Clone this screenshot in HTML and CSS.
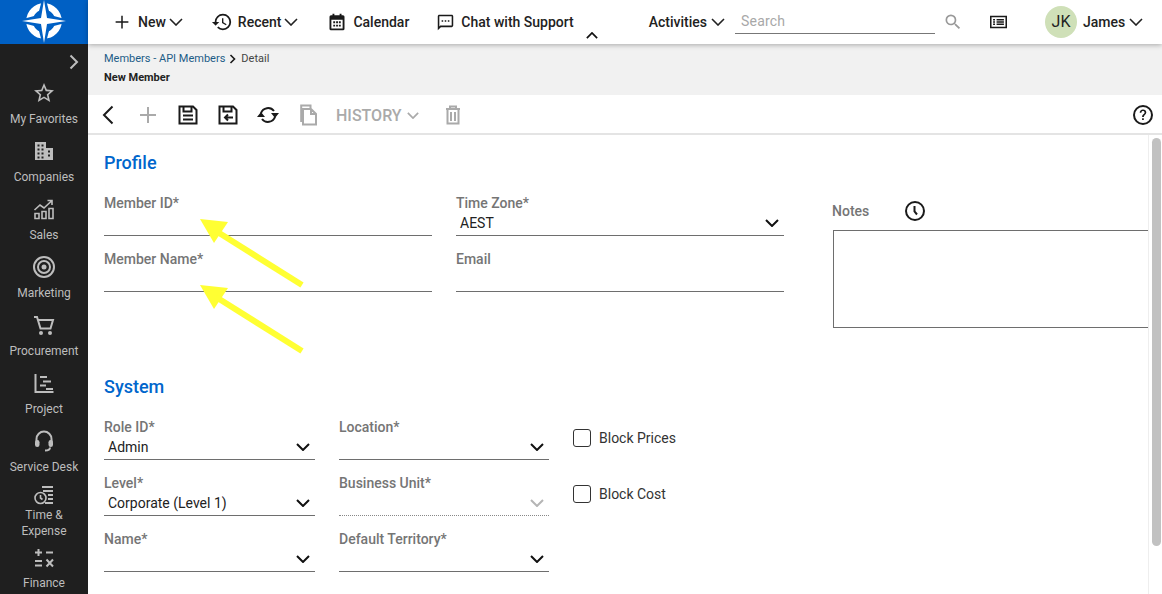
FILE: index.html
```html
<!DOCTYPE html>
<html lang="en">
<head>
    <meta charset="UTF-8">
    <meta name="viewport" content="width=device-width, initial-scale=1.0">
    <title>New Member</title>
    <link rel="stylesheet" href="styles.css">
</head>
<body>
    <!-- Sidebar -->
    <aside class="sidebar">
        <div class="logo">
            <svg width="50" height="44" viewBox="0 0 50 44">
                <circle cx="25" cy="21" r="14.500" fill="none" stroke="#fff" stroke-width="6.500"/>
                <path d="M25 -8L31 15L54 21L31 27L25 50L19 27L-4 21L19 15Z" fill="#0060c4"/>
                <path d="M25 0L28 18L47 21L28 24L25 43L22 24L3 21L22 18Z" fill="#fff"/>
            </svg>
        </div>
        <div class="expand">
            <svg width="12" height="16" viewBox="0 0 12 16"><path d="M2.500 1.500L9 8L2.500 14.500" class="line"/></svg>
        </div>
        <nav class="side-nav">
            <a class="side-item">
                <svg class="side-icon" viewBox="0 0 24 24"><path d="M22 9.240l-7.190-.62L12 2 9.190 8.630 2 9.240l5.460 4.730L5.820 21 12 17.270 18.180 21l-1.630-7.030L22 9.240zM12 15.400l-3.760 2.270 1-4.280-3.320-2.880 4.380-.38L12 6.100l1.710 4.040 4.380.38-3.320 2.880 1 4.280L12 15.400z"/></svg>
                <span>My Favorites</span>
            </a>
            <a class="side-item">
                <svg class="side-icon" viewBox="0 0 24 24"><path fill-rule="evenodd" d="M3 3h11v6h7v12H3zM5.500 5.500v2h2v-2zm4 0v2h2v-2zm-4 4v2h2v-2zm4 0v2h2v-2zm-4 4v2h2v-2zm4 0v2h2v-2zm-4 4v2h2v-2zm4 0v2h2v-2zm6.500-6v2h2v-2zm0 4v2h2v-2z"/></svg>
                <span>Companies</span>
            </a>
            <a class="side-item">
                <svg class="side-icon" viewBox="0 0 24 24"><path d="M2.500 13L8 8l4 3 7.500-7M15.500 3.500h4.500V8" class="line thin"/><path d="M3 16.500h4v5H3zM10 14.500h4v7h-4zM17 11.500h4v10h-4z" class="line thin"/></svg>
                <span>Sales</span>
            </a>
            <a class="side-item">
                <svg class="side-icon" viewBox="0 0 24 24"><circle cx="12" cy="12" r="10" class="line"/><circle cx="12" cy="12" r="6" class="line"/><circle cx="12" cy="12" r="2.500"/></svg>
                <span>Marketing</span>
            </a>
            <a class="side-item">
                <svg class="side-icon" viewBox="0 0 24 24"><path d="M2 4h3l3.500 11.500h10L21 7H6" class="line"/><circle cx="9" cy="20" r="2"/><circle cx="18" cy="20" r="2"/></svg>
                <span>Procurement</span>
            </a>
            <a class="side-item">
                <svg class="side-icon" viewBox="0 0 24 24"><path d="M3.500 3v18h18M8 6h7M11 10.500h8M8 14.500h6M14 18h7" class="line"/></svg>
                <span>Project</span>
            </a>
            <a class="side-item">
                <svg class="side-icon" viewBox="0 0 24 24"><path d="M4.500 13v-3a7.500 7.500 0 0 1 15 0v3M18 18.500c0 2-2 3-5 3" class="line"/><rect x="3" y="11" width="4.500" height="7" rx="2.200"/><rect x="16.500" y="11" width="4.500" height="7" rx="2.200"/></svg>
                <span>Service Desk</span>
            </a>
            <a class="side-item side-item-time">
                <svg class="side-icon" viewBox="0 0 24 24"><circle cx="8.500" cy="15" r="5.500" class="line thin"/><path d="M8.500 12v3l2 1.500" class="line thin"/><path d="M10 3h11v2H10zM11 7h10v2H11zM16 11h5v2h-5zM16 15h5v2h-5zM13 19h8v2h-8z"/></svg>
                <span>Time &amp; Expense</span>
            </a>
            <a class="side-item side-item-finance">
                <svg class="side-icon" viewBox="0 0 24 24"><path d="M3 6.500h7M6.500 3v7M14 6.500h7M3 15h7M3 19.500h7M14.500 13.500l6.500 7M21 13.500l-6.500 7" class="line"/></svg>
                <span>Finance</span>
            </a>
        </nav>
    </aside>

    <div class="page">
        <!-- Top bar -->
        <header class="topbar">
            <a class="top-link top-new">
                <svg class="top-icon" viewBox="0 0 24 24"><path d="M12 3.500v17M3.500 12h17" class="line"/></svg>
                <span>New</span>
                <svg class="chev" viewBox="0 0 14 8"><path d="M1 1l6 6 6-6"/></svg>
            </a>
            <a class="top-link top-recent">
                <svg class="top-icon wide" viewBox="0 0 24 24"><path d="M13 3a9 9 0 0 0-9 9H1l3.890 3.890.07.14L9 12H6c0-3.870 3.130-7 7-7s7 3.130 7 7-3.130 7-7 7c-1.930 0-3.680-.79-4.940-2.060l-1.420 1.420A8.954 8.954 0 0 0 13 21a9 9 0 0 0 0-18zm-1 5v5l4.280 2.540.72-1.210-3.500-2.080V8H12z"/></svg>
                <span>Recent</span>
                <svg class="chev" viewBox="0 0 14 8"><path d="M1 1l6 6 6-6"/></svg>
            </a>
            <a class="top-link top-calendar">
                <svg class="top-icon" viewBox="0 0 24 24"><path fill-rule="evenodd" d="M6 1h2.500v2h7V1H18v2h2a2 2 0 0 1 2 2v16a2 2 0 0 1-2 2H4a2 2 0 0 1-2-2V5a2 2 0 0 1 2-2h2zM4.500 9v11.500h15V9zM7 11h2.500v2.500H7zm3.800 0h2.500v2.500h-2.500zm3.700 0H17v2.500h-2.500zM7 15.500h2.500V18H7zm3.800 0h2.500V18h-2.500zm3.700 0H17V18h-2.500z"/></svg>
                <span>Calendar</span>
            </a>
            <a class="top-link top-chat">
                <svg class="top-icon" viewBox="1 1 22 22"><path d="M20 2H4c-1.100 0-2 .9-2 2v18l4-4h14c1.100 0 2-.9 2-2V4c0-1.100-.9-2-2-2zm0 14H5.170L4 17.170V4h16v12zM7 9h2v2H7zm4 0h2v2h-2zm4 0h2v2h-2z"/></svg>
                <span>Chat with Support</span>
            </a>
            <svg class="caret" viewBox="0 0 14 8"><path d="M1 7l6-6 6 6"/></svg>
            <a class="top-link top-activities">
                <span>Activities</span>
                <svg class="chev" viewBox="0 0 14 8"><path d="M1 1l6 6 6-6"/></svg>
            </a>
            <div class="search-box">Search</div>
            <svg class="search-icon" viewBox="0 0 24 24"><path d="M15.500 14h-.79l-.28-.27A6.471 6.471 0 0 0 16 9.500 6.500 6.500 0 1 0 9.500 16c1.610 0 3.090-.59 4.230-1.570l.27.28v.79l5 4.990L20.490 19l-4.990-5zm-6 0C7.010 14 5 11.990 5 9.500S7.010 5 9.500 5 14 7.010 14 9.500 11.990 14 9.500 14z"/></svg>
            <svg class="top-icon top-list" viewBox="1 3 22 18"><path fill-rule="evenodd" d="M1 4h22v16H1zM3 6v12h18V6zM5 8h2.500v2H5zm4.500 0H19v2H9.500zM5 11h2.500v2H5zm4.500 0H19v2H9.500zM5 14h2.500v2H5zm4.500 0H19v2H9.500z"/></svg>
            <div class="avatar">JK</div>
            <a class="top-link top-user">
                <span>James</span>
                <svg class="chev" viewBox="0 0 14 8"><path d="M1 1l6 6 6-6"/></svg>
            </a>
        </header>

        <!-- Breadcrumb -->
        <div class="crumbs">
            <div class="crumb-path">
                <a>Members - API Members</a>
                <svg width="8" height="10" viewBox="0 0 8 10"><path d="M1.500 1l4 4-4 4" class="line dark thin"/></svg>
                <span>Detail</span>
            </div>
            <div class="crumb-title">New Member</div>
        </div>

        <!-- Toolbar -->
        <div class="toolbar">
            <svg class="tool tool-back" viewBox="0 0 12 20"><path d="M10.500 1.500L2 10l8.500 8.500" class="line dark"/></svg>
            <svg class="tool tool-add" viewBox="0 0 18 18"><path d="M9 1v16M1 9h16" class="line"/></svg>
            <svg class="tool tool-save" viewBox="0 0 20 20"><path d="M2 1.500h13L18.500 5v13.500h-17v-17zM5.500 2v4.500h8V2M5 10.500h10M5 14.500h10" class="line dark"/></svg>
            <svg class="tool tool-saveback" viewBox="0 0 20 20"><path d="M2 1.500h13L18.500 5v13.500h-17v-17zM5.500 2v4.500h8V2M15 12.500H7M10 9.500l-3 3 3 3" class="line dark"/></svg>
            <svg class="tool tool-sync" viewBox="0 0 22 20"><path d="M4 8A7.500 7.500 0 0 1 17 6M18 12A7.500 7.500 0 0 1 5 14" class="line dark"/><path d="M14 8h8l-4 5zM0 12h8l-4-5z" class="solid"/></svg>
            <svg class="tool tool-copy" viewBox="0 0 18 22"><path d="M11 5H3v15.500h13V10zM11 5v5h5M3 17H1.200V1.500h9.300V5" class="line"/></svg>
            <span class="tool-history">HISTORY</span>
            <svg class="chev chev-grey" viewBox="0 0 14 8"><path d="M1 1l6 6 6-6"/></svg>
            <svg class="tool tool-trash" viewBox="0 0 16 20"><path d="M1 4h14M5 4V1.500h6V4M2.500 4v14.500h11V4M6 7v9M10 7v9" class="line"/></svg>
            <svg class="tool tool-help" viewBox="0 0 20 20"><circle cx="10" cy="10" r="9" class="line dark"/><path d="M10 4.500c-2 0-3.300 1.300-3.300 3.200h1.700c0-1 .6-1.700 1.600-1.700s1.600.7 1.600 1.600c0 1.700-2.500 1.600-2.500 4.400h1.700c0-2 2.500-2.200 2.500-4.400 0-1.800-1.300-3.100-3.300-3.100zM9.100 13.300h1.700V15H9.100z" class="solid"/></svg>
        </div>

        <!-- Form -->
        <div class="content">
            <main class="form">
                <h3>Profile</h3>
                <div class="profile">
                    <div class="profile-grid">
                        <div class="field"><label>Member ID*</label><div class="value"></div></div>
                        <div class="field"><label>Time Zone*</label><div class="value">AEST<svg class="drop" viewBox="0 0 14 8"><path d="M1 1l6 6 6-6"/></svg></div></div>
                        <div class="field"><label>Member Name*</label><div class="value"></div></div>
                        <div class="field"><label>Email</label><div class="value"></div></div>
                    </div>
                    <div class="notes">
                        <div class="notes-head">
                            <label>Notes</label>
                            <svg width="20" height="20" viewBox="0 0 20 20"><circle cx="10" cy="10" r="9" class="line dark"/><path d="M9.500 5v5.500l2.500 3" class="line dark"/></svg>
                        </div>
                        <div class="notes-box"></div>
                    </div>
                </div>

                <h3 class="system-title">System</h3>
                <div class="system-grid">
                    <div class="field"><label>Role ID*</label><div class="value">Admin<svg class="drop" viewBox="0 0 14 8"><path d="M1 1l6 6 6-6"/></svg></div></div>
                    <div class="field"><label>Location*</label><div class="value"><svg class="drop" viewBox="0 0 14 8"><path d="M1 1l6 6 6-6"/></svg></div></div>
                    <div class="check"><span class="box"></span>Block Prices</div>
                    <div class="field"><label>Level*</label><div class="value">Corporate (Level 1)<svg class="drop" viewBox="0 0 14 8"><path d="M1 1l6 6 6-6"/></svg></div></div>
                    <div class="field disabled"><label>Business Unit*</label><div class="value"><svg class="drop" viewBox="0 0 14 8"><path d="M1 1l6 6 6-6"/></svg></div></div>
                    <div class="check"><span class="box"></span>Block Cost</div>
                    <div class="field"><label>Name*</label><div class="value"><svg class="drop" viewBox="0 0 14 8"><path d="M1 1l6 6 6-6"/></svg></div></div>
                    <div class="field"><label>Default Territory*</label><div class="value"><svg class="drop" viewBox="0 0 14 8"><path d="M1 1l6 6 6-6"/></svg></div></div>
                </div>

                <!-- Yellow annotation arrows -->
                <svg class="arrows" width="120" height="145" viewBox="0 0 120 145">
                    <path d="M12 9L40 12L26 33Z"/>
                    <path d="M28 21L114 75" class="shaft"/>
                    <path d="M12 75L40 78L26 99Z"/>
                    <path d="M28 87L114 141" class="shaft"/>
                </svg>
            </main>
            <div class="scrollbar"><div class="thumb"></div></div>
        </div>
    </div>
</body>
</html>
```

FILE: styles.css
```css
* {
    box-sizing: border-box;
}
body {
    font-family: Roboto, Arial, sans-serif;
    margin: 0;
    height: 100vh;
    display: flex;
    overflow: hidden;
    background-color: white;
    color: #222;
}
svg {
    display: block;
    flex: none;
    fill: currentColor;
}
.line {
    fill: none;
    stroke: currentColor;
    stroke-width: 2;
}
.line.thin {
    stroke-width: 1.6;
}
.line.dark {
    stroke: #1a1a1a;
}
.solid {
    fill: #1a1a1a;
}

/* Sidebar */
.sidebar {
    width: 88px;
    flex: none;
    background-color: #1f1f1f;
    color: #bdbdbd;
    overflow: hidden;
}
.logo {
    height: 44px;
    background-color: #0060c4;
    display: flex;
    justify-content: center;
}
.expand {
    height: 37px;
    padding: 10px 0 0 68px;
}
.side-nav {
    display: flex;
    flex-direction: column;
    gap: 12px;
}
.side-item {
    display: flex;
    flex-direction: column;
    align-items: center;
    gap: 6px;
    font-size: 12px;
    line-height: 16px;
    text-align: center;
}
.side-icon {
    width: 24px;
    height: 24px;
}
.side-item-time {
    margin-top: -4px;
    gap: 0;
    padding: 0 14px;
}
.side-item-finance {
    margin-top: -5px;
    gap: 5px;
}

/* Top bar */
.page {
    flex: 1;
    min-width: 0;
    display: flex;
    flex-direction: column;
}
.topbar {
    height: 44px;
    flex: none;
    display: flex;
    align-items: center;
    background-color: white;
    box-shadow: 0 1px 5px rgba(0, 0, 0, 0.3);
    position: relative;
    font-size: 14px;
    font-weight: 500;
    color: #222;
}
.top-link {
    display: flex;
    align-items: center;
}
.top-icon {
    width: 18px;
    height: 18px;
    color: #1a1a1a;
}
.top-icon.wide {
    width: 22px;
    height: 22px;
}
.top-new {
    margin-left: 25px;
}
.top-new span {
    margin: 0 3px 0 7px;
}
.top-recent {
    margin-left: 28px;
}
.top-recent span {
    margin: 0 3px 0 5px;
}
.top-calendar {
    margin-left: 30px;
}
.top-calendar span {
    margin-left: 7px;
}
.top-chat {
    margin-left: 28px;
}
.top-chat .top-icon {
    width: 17px;
    height: 17px;
}
.top-chat span {
    margin-left: 7px;
}
.chev {
    width: 14px;
    height: 8px;
    fill: none;
    stroke: #222;
    stroke-width: 1.6;
}
.caret {
    width: 12px;
    height: 7px;
    fill: none;
    stroke: #111;
    stroke-width: 2;
    margin: 27px 0 0 12px;
}
.top-activities {
    margin-left: 51px;
}
.top-activities span {
    margin-right: 4px;
}
.search-box {
    width: 200px;
    height: 24px;
    margin: 0 0 0 10px;
    padding: 2px 0 0 6px;
    border-bottom: 1px solid #777;
    color: #a8a8a8;
    font-weight: 400;
    line-height: 18px;
    letter-spacing: 0.2px;
}
.search-icon {
    width: 20px;
    height: 20px;
    margin-left: 8px;
    color: #999;
}
.top-list {
    margin-left: 27px;
    width: 17px;
    height: 14px;
}
.avatar {
    width: 32px;
    height: 32px;
    margin-left: 38px;
    border-radius: 50%;
    background-color: #cfe0b8;
    color: #222;
    font-size: 16px;
    font-weight: 400;
    line-height: 32px;
    text-align: center;
}
.top-user {
    margin-left: 6px;
}
.top-user span {
    margin-right: 4px;
}

/* Breadcrumb */
.crumbs {
    height: 51px;
    flex: none;
    padding: 8px 0 0 16px;
    background-color: #f1f1f1;
    font-size: 11px;
    line-height: 14px;
}
.crumb-path {
    display: flex;
    align-items: center;
    gap: 4px;
    color: #444;
}
.crumb-title {
    margin-top: 5px;
    font-weight: 700;
    color: #222;
}
.crumb-path a {
    color: #1d5c87;
}

/* Toolbar */
.toolbar {
    height: 40px;
    flex: none;
    display: flex;
    align-items: center;
    padding-top: 2px;
    border-bottom: 2px solid #e4e4e4;
    color: #aaa;
}
.tool-back {
    width: 12px;
    height: 20px;
    margin-left: 14px;
}
.tool-add {
    width: 18px;
    height: 18px;
    margin-left: 25px;
}
.tool-save {
    width: 20px;
    height: 20px;
    margin-left: 21px;
}
.tool-saveback {
    width: 20px;
    height: 20px;
    margin-left: 20px;
}
.tool-sync {
    width: 22px;
    height: 20px;
    margin-left: 19px;
}
.tool-copy {
    width: 18px;
    height: 22px;
    margin-left: 21px;
}
.tool-history {
    margin: 0 5px 0 18px;
    font-size: 16px;
    font-weight: 500;
    color: #aaa;
}
.chev-grey {
    width: 12px;
    height: 7px;
    stroke: #aaa;
    stroke-width: 2;
}
.tool-trash {
    width: 16px;
    height: 20px;
    margin-left: 26px;
}
.tool-help {
    width: 20px;
    height: 20px;
    margin-left: auto;
    margin-right: 9px;
}

/* Form */
.content {
    flex: 1;
    min-height: 0;
    display: flex;
}
.form {
    flex: 1;
    min-width: 0;
    padding: 16px 0 0 16px;
    overflow: hidden;
    position: relative;
}
h3 {
    margin: 0 0 20px;
    font-size: 18px;
    font-weight: 500;
    line-height: 24px;
    color: #0066cc;
}
.profile {
    display: flex;
    height: 97px;
}
.profile-grid {
    display: grid;
    grid-template-columns: 328px 328px;
    column-gap: 24px;
    row-gap: 15px;
    align-content: start;
}
.field label,
.notes-head label {
    display: block;
    font-size: 14px;
    font-weight: 500;
    line-height: 16px;
    color: #757575;
}
.value {
    height: 25px;
    padding: 0 0 1px 4px;
    display: flex;
    align-items: center;
    justify-content: space-between;
    border-bottom: 1px solid #6e6e6e;
    font-size: 14px;
    line-height: 22px;
    color: #222;
}
.drop {
    width: 14px;
    height: 8px;
    margin: 0 5px 0 auto;
    fill: none;
    stroke: #111;
    stroke-width: 2;
}
.disabled .value {
    border-bottom: 1px dotted #888;
}
.disabled .drop {
    stroke: #b5b5b5;
}
.notes {
    margin: 8px 0 0 48px;
    flex: none;
    width: 340px;
}
.notes-head {
    display: flex;
    align-items: center;
    height: 16px;
    gap: 36px;
}
.notes-box {
    width: 340px;
    height: 98px;
    margin: 11px 0 0 1px;
    border: 1px solid #6e6e6e;
}
.system-title {
    margin-top: 83px;
}
.system-grid {
    display: grid;
    grid-template-columns: 211px 210px auto;
    column-gap: 24px;
    row-gap: 15px;
}
.check {
    display: flex;
    align-items: center;
    gap: 8px;
    padding-bottom: 4px;
    font-size: 14px;
    color: #333;
}
.box {
    width: 18px;
    height: 18px;
    border: 1.5px solid #333;
    border-radius: 3px;
}
.arrows {
    position: absolute;
    left: 100px;
    top: 75px;
    fill: #ffff33;
}
.shaft {
    fill: none;
    stroke: #ffff33;
    stroke-width: 6;
}
.scrollbar {
    width: 14px;
    flex: none;
    padding: 3px 1px 0 3px;
    border-left: 1px solid #eee;
}
.thumb {
    height: 408px;
    background-color: #c1c1c1;
    border-radius: 5px;
}
```
